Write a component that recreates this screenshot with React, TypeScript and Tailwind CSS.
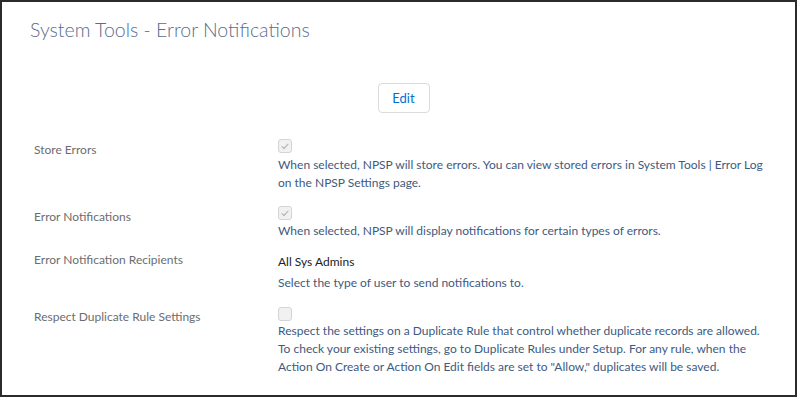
import React from 'react';

const Check = ({ checked }: { checked: boolean }) => (
  <div className="w-[14px] h-[14px] rounded-[3px] border border-[#d4d4d4] bg-[#f1f1f1] flex items-center justify-center">
    {checked && (
      <svg width="8" height="7" viewBox="0 0 8 7" fill="none">
        <path d="M1 3.6 L3 5.5 L7 1.2" stroke="#b8b8b8" strokeWidth="1.2" strokeLinecap="round" strokeLinejoin="round" />
      </svg>
    )}
  </div>
);

interface RowProps {
  label: string;
  labelPad: string;
  children: React.ReactNode;
  className?: string;
}

const Row = ({ label, labelPad, children, className = '' }: RowProps) => (
  <div className={`flex ${className}`}>
    <div className={`w-[276px] shrink-0 pl-[32px] text-[#6b6d70] ${labelPad}`}>{label}</div>
    <div className="flex-1 pr-4">{children}</div>
  </div>
);

export default function App() {
  return (
    <div
      className="w-[797px] h-[397px] border-2 border-[#2b2b2b] bg-white text-[12px] leading-[18px]"
      style={{ fontFamily: 'Lato, "Open Sans", sans-serif' }}
    >
      <h1 className="pl-[28px] pt-[15px] text-[19.5px] leading-[26px] text-[#5a6c8a] font-light">
        System Tools - Error Notifications
      </h1>

      <div className="flex justify-center pt-[40px] pl-[10px]">
        <button className="h-[30px] w-[52px] rounded-[4px] border border-[#dddbda] bg-white text-[13px] text-[#0070d2]">
          Edit
        </button>
      </div>

      <div className="pt-[26px] text-[#3e5a80]">
        <Row label="Store Errors" labelPad="pt-[2px]">
          <Check checked />
          <p className="pt-[3px]">
            When selected, NPSP will store errors. You can view stored errors in System Tools | Error Log
            <br />
            on the NPSP Settings page.
          </p>
        </Row>

        <Row label="Error Notifications" labelPad="pt-[2px]" className="mt-[14px]">
          <Check checked />
          <p className="pt-[2px]">When selected, NPSP will display notifications for certain types of errors.</p>
        </Row>

        <Row label="Error Notification Recipients" labelPad="-mt-[2px]" className="mt-[13px]">
          <div className="text-[#222]">All Sys Admins</div>
          <p className="pt-[3px]">Select the type of user to send notifications to.</p>
        </Row>

        <Row label="Respect Duplicate Rule Settings" labelPad="pt-[1px]" className="mt-[15px]">
          <Check checked={false} />
          <p className="pt-[1px]">
            Respect the settings on a Duplicate Rule that control whether duplicate records are allowed.
            <br />
            To check your existing settings, go to Duplicate Rules under Setup. For any rule, when the
            <br />
            Action On Create or Action On Edit fields are set to "Allow," duplicates will be saved.
          </p>
        </Row>
      </div>
    </div>
  );
}
